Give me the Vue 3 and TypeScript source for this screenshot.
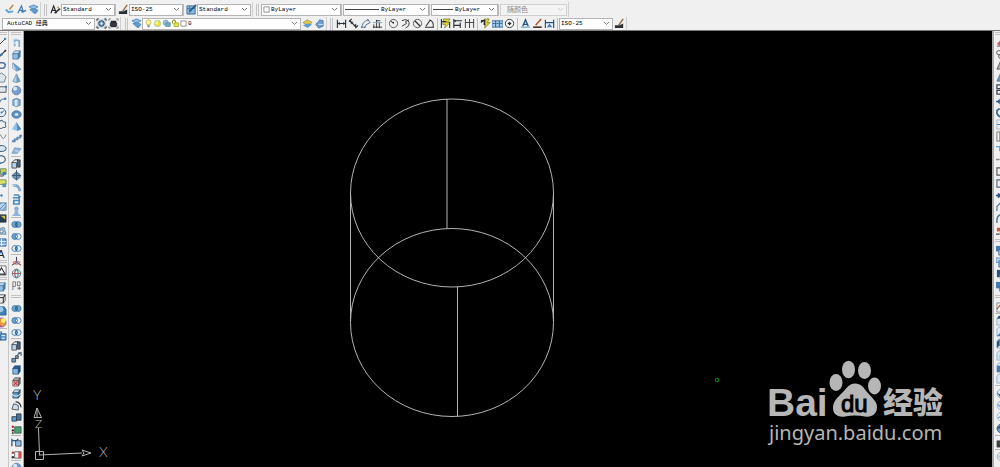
<script setup lang="ts">
import { h, type FunctionalComponent } from 'vue'

const K = '#2b3036'
const B = '#3f7cb8'
const D = '#255583'
const L = '#a9cbe8'

const line = (d: string, color = K, width = 1) =>
  `<path d="${d}" fill="none" stroke="${color}" stroke-width="${width}"/>`
const shape = (d: string, fill: string, stroke = 'none') =>
  `<path d="${d}" fill="${fill}" stroke="${stroke}" stroke-width=".8"/>`
const dot = (x: number, y: number, r: number, fill: string, stroke = 'none') =>
  `<circle cx="${x}" cy="${y}" r="${r}" fill="${fill}" stroke="${stroke}" stroke-width="1"/>`

const cube = (front: string, top: string, side: string, edge: string) =>
  shape('M2 5h6v6H2z', front, edge) + shape('M2 5l2-3h6L8 5z', top, edge) + shape('M8 5l2-3v6l-2 3z', side, edge)
const pair = (left: string, right: string, mid: string) =>
  dot(4.2, 6, 3.2, left, B) + dot(7.8, 6, 3.2, right, B) + shape('M6 3.4Q8.4 6 6 8.6Q3.6 6 6 3.4z', mid, D)
const tile = (fill: string, cut: string) =>
  shape('M1 4l2-3h8v10H1z', '#d9e9f6', '#7aa5cb') + shape(cut, fill)

const glyphs: Record<string, string> = {
  brush: line('M2 6l3 3 5-1', '#5da5d6', 2) + line('M6 6l4-5', '#b98541', 1.6),
  textPen: line('M2 10l4-8 2 7M3 7h4', '#3f78ad', 1.3) + line('M6 9l5-2', B, 1.6),
  layers: shape('M1 3l5-2 5 2-5 3z', '#91bfe4', B) + shape('M2 6l5-1 4 2-4 3z', '#659dce', B) + shape('M2 8l5 2 4-2-3 3z', B),
  styleA: line('M1 10l3-8 3 8M2 7h4', K, 1.3) + line('M5 10l6-5', K, 1.6) + line('M8 3l2 2', '#c28b35', 1.4),
  dimPen: shape('M1 11V8h5l4-2v5z', K) + line('M5 8l5-7', '#8b6b40', 1.5),
  tablePen: shape('M1 2h9v9H1z', '#8bb8df', D) + line('M1 5h9M4 2v9', B) + line('M4 8l7-7', D, 1.7),
  gear: shape('M1 1h10v10H1z', '#c9d9e5') + line('M1 3V1h2M9 1h2v2M11 9v2H9M3 11H1V9', K) + dot(6, 6, 3, '#7aa7ce', K) + dot(6, 6, 1, '#fff'),
  workspace: line('M1 3V1h2M9 1h2v2M11 9v2H9M3 11H1V9', '#777') + shape('M3 3h6v7H3z', '#25292d') + shape('M2 5h8v4H2z', '#353a40'),
  layerPrev: shape('M1 5l5-3 5 3-5 3z', '#e5c94d', '#9b8e45') + shape('M1 8l5-2 5 1-5 4z', '#5b9ace'),
  layerState: shape('M2 7l4-5 4 1v6l-5 2z', '#6b9eca', '#426f9a') + line('M1 6l4-3M5 7h5', '#d9ecfa', 1),
  dimLinear: line('M1.5 2v9M10.5 2v9M2 6h8', K, 1.2) + shape('M2 6l2-2v4zM10 6L8 4v4z', K),
  dimAligned: line('M2 3l7 7M1 4l3-3M8 11l3-3', K, 1.3) + shape('M3 4h3L3 7zM9 9V6L6 9z', K),
  dimArc: line('M2 11Q2 4 9 2M5 11Q5 7 11 5M1 10h5M8 1l3 4', '#486b89', 1),
  dimOrd: line('M1 10h10M2 7v4M5 2v9M8 5v6M5 3h4', K) + line('M1 5h10', '#82a4c0'),
  radius: dot(6, 6, 4.5, 'none', '#555') + line('M6 6L3 3M6 6V4', K, 1.1),
  jogged: line('M2 3Q8 0 10 5Q11 9 6 11M2 9l5-3-1-2 4-2', K),
  diameter: dot(6, 6, 4.5, 'none', '#555') + line('M3 3l6 6', K, 1.3),
  angular: line('M1 10h10M2 9l5-7M6 2Q11 4 10 10', K, 1.1),
  quick: shape('M4 1h7L8 5h3L5 11l1-4H3z', '#e2cf38', '#6f8428') + line('M1.5 1v10M10.5 4v7M2 4h5', K, 1.2),
  baseline: line('M2 1v10M2 3h9M2 8h7M9 5v6', K, 1.2) + shape('M2 3l2-1v3z', K),
  cont: line('M1.5 1v10M6 1v10M10.5 1v10M2 5h8', '#454b50', 1.1),
  dimEdit: shape('M5 1h5L8 5h3L5 11l1-4H4z', '#dfd239', '#82782c') + line('M1 3h5M5 2v6M1 5l4-3', K, 1.4),
  tol: shape('M0 3h12v7H0z', '#a5cbea', D) + line('M4 3v7M8 3v7M1 6h2M5 6h2M9 6h2', D),
  center: dot(6, 6, 4.5, '#fff', K) + line('M6 4v4M4 6h4', K, 1.4),
  dimA: line('M3 9l3-7 3 7M4 7h4', D, 1.5) + line('M1 10h10', '#63a8da', 1.3),
  dimText: line('M2 10h9M4 8l6-7', '#a35f34', 1.7) + line('M1 10h9', K, 1.3),
  dimUpdate: line('M1.5 2v9M10.5 2v9M2 5h8', D, 1.3) + shape('M3 10l3-4 3 4z', B),
  bulb: dot(6, 4.5, 3.4, '#fff79c', '#b5ad4a') + shape('M4.5 8h3v3h-3z', '#8b9199'),
  sun: dot(6, 6, 4.3, '#f4df34', '#80c6c9') + dot(5, 5, 2, '#fff489'),
  freeze: dot(5, 5, 3.6, '#9bc2dc', '#719ab5') + shape('M5 5h6v5H5z', '#6ab3b9', '#587c87'),
  unlock: line('M2 6V3q2-3 4 0v2', '#9c9c21', 1.5) + shape('M4 5h6v5H4z', '#e3e647', '#858c22'),
  swatch: shape('M1.5 1.5h9v9h-9z', '#fff', '#222'),
  line: line('M1 11L11 1', K) + dot(10, 2, 1.2, B),
  xline: line('M1 11L11 1', K, 1.2) + dot(6, 6, 1.4, B) + dot(10, 2, 1, K),
  pline: line('M1 9h6q3 0 3-3T7 3H3', '#54759a', 1.4) + dot(10, 5, 1, B),
  polygon: shape('M6 1l5 4-2 6H3L1 5z', '#dde6eb', '#4c6679'),
  rect: shape('M1 3h10v6H1z', '#dfe8ef', K) + dot(11, 3, 1.3, B),
  arc: line('M2 10Q3 3 11 3', '#49687f') + dot(10, 3, 1.3, B) + dot(4, 6, 1.2, B),
  circle: dot(6, 6, 4.6, '#e9f1f6', '#345e87') + line('M6 6l3-2', B) + dot(6, 6, 1.2, B),
  cloud: line('M2 8Q0 4 4 3Q6 0 8 3Q12 3 10 6Q12 10 8 9Q5 12 2 8', '#526e84', 1.1),
  spline: line('M1 7Q4 1 6 6T11 4', '#6f7980', 1),
  ellipse: `<ellipse cx="6" cy="6" rx="5" ry="3.3" fill="#d6e5ee" stroke="#426b8d" stroke-width="1.2"/>`,
  ellArc: line('M2 3Q8 0 10 5Q11 9 5 10', '#4d6c83', 1.3) + dot(5, 10, 1, B),
  block: shape('M1 6h7v5H1z', '#b8cfdd', K) + shape('M5 3h6v6H5z', '#cfd94e', '#51744a') + dot(9, 8, 2, B),
  makeBlock: shape('M3 2h8v5H3z', '#dce266', '#5c7540') + shape('M7 6h4v4H7z', '#5895bd'),
  point: dot(6, 6, 1.3, B),
  hatch: shape('M1 2h10v8H1z', '#bed7ea', '#436887') + line('M1 7l5-5M3 10l8-8M7 10l4-4', B),
  gradient: shape('M1 2h10v8H1z', '#26394d', K) + shape('M5 3h5v4z', '#cdbc52'),
  region: shape('M2 9Q3 2 9 3l2 7H1z', '#acc8db', '#577a94') + dot(6, 7, 1.8, '#eee', '#577a94'),
  table: shape('M1 2h10v8H1z', '#78a7dd', D) + line('M1 5h10M1 8h10M6 2v8', '#e8f2ff'),
  cubeBlue: cube('#93bddf', '#c8def0', '#4e83b4', '#47759c'),
  cubeWire: cube('none', 'none', 'none', K),
  polysolid: line('M4 10V7M4 6V3l5 1v7', '#82add4', 2) + line('M3 3l3-1', '#b9d4ea', 1.4),
  wedge: shape('M2 2l9 7-5 2-4-3z', '#6d9fc9', '#527fa5') + shape('M2 2v6l4 3z', '#c2d9eb'),
  cone: shape('M6 1l4 8q-4 3-8 0z', '#b3cfe4', '#6c8da8') + shape('M6 1v9q3 0 4-1z', '#7199ba'),
  sphere: dot(6, 6, 4.7, '#729fd0', '#6685a9') + dot(4.5, 4, 2.2, '#d6e7f5'),
  cylinder: shape('M2 3q4-3 8 0v6q-4 3-8 0z', '#82afd5', '#4c769b') + shape('M4 3h3v7H4z', '#d4e6f3'),
  torus: `<ellipse cx="6" cy="6" rx="5" ry="4" fill="#5e92bf" stroke="#44739e"/><ellipse cx="6" cy="6" rx="2" ry="1.3" fill="#e1edf6"/>`,
  pyramid: shape('M6 1l5 8-4 2-6-2z', '#91c3e8') + shape('M6 1l5 8-4 2z', '#4d8cc3'),
  helix: line('M1 9h3V7h3V5h3V3h2', '#5a8ab5', 2),
  surface: shape('M4 3l7 1-4 5-6 0z', '#8eb5d8', '#6e96b9') + line('M4 6l4 1', '#dceaf5'),
  extrude: shape('M1 5h5v6H1z', '#b9d2e5', K) + shape('M7 2h3v8H7z', '#416789', K) + line('M1 5l3-3h4', K),
  press: shape('M2 5l4-3 4 3v3l-4 3-4-3z', '#6d96ba', '#3c5a74') + line('M6 0v11M1 6h10', '#385873'),
  sweep: line('M2 4Q8 2 10 10', '#7aa8d0', 3) + line('M1 5l4-2', '#d4e8f7'),
  revolve: line('M2 4h7v7H3V7h7M3 1h6', '#4a8abc', 1.7) + shape('M8 1l3 2-3 2z', B),
  loft: dot(6, 3, 2, '#8db5d9', '#7ba4c8') + shape('M4 5h4v3l3 3H1l3-3z', '#8db5d9'),
  union: pair('#72a8ca', '#72a8ca', '#4c8191'),
  subtract: pair('#6aa6cb', '#f1f5f8', '#dce9f2'),
  intersect: pair('#e9f0f5', '#e9f0f5', '#5d99c2'),
  move3: line('M6 6V1M6 7L1 10M6 7l5 3', K) + line('M2 7q4-3 8 0q-4 4-8 0', '#cc5049') + dot(6, 7, 1, B),
  rotate3: dot(6, 6, 4.6, '#e4eff2', '#4c80a4') + line('M6 1q-4 5 0 10M1 6h10', '#bf5759', 1.3) + line('M6 1q4 5 0 10', '#4a947b', 1.3),
  align3: line('M2 11V2h3v5H2M7 2v4h3V2z', '#787878', 1) + line('M7 9h4M9 7v4', '#596c7b'),
  visual: shape('M1 1h10v10H1z', '#fff', '#444') + line('M2 10l4-7 4 7z', K, 1.2),
  shaded: shape('M2 2h7l2 3v6H2z', '#3f80b6', D) + dot(5, 5, 3, '#9bcae9'),
  ball: dot(6, 6, 5, '#e4983f', '#9961a9') + dot(8, 4, 2.6, '#fff16d') + shape('M2 7l5 4-4-1z', '#693a9d'),
  sheets: shape('M1 2h5v9H1z', '#b3d2ea', D) + shape('M5 4h6v7H5z', '#5e9bd0', D) + line('M6 6h4M6 9h4', '#dcebf7'),
  faceCopy: shape('M1 7h4v4H1z', '#6d9ec5', K) + shape('M5 4h3v3H5z', '#8a9aa7', K) + line('M7 3l3-2M8 1h3v3', '#36536b', 1.2),
  faceBlue: cube('#87b8e4', '#2b5c8b', '#1e4165', D),
  faceRed: cube('#f2c3c6', '#aaa', '#777', '#4b4b4b') + line('M3 6l4 4M7 6l-4 4', '#d03c45', 1.3),
  faceTurn: cube('#6198c5', '#c4dbed', '#406784', '#356') + line('M1 7q5 4 10-1', '#fff'),
  taper: shape('M1 10l2-6 5 2v5z', '#d0e0ec', K) + line('M5 2q5 0 6 6', K, 1.2),
  faces: shape('M1 5h5v5H1z', '#579ad0', K) + shape('M6 2h5v7H6z', '#41749f', K),
  faceGreen: shape('M4 3h7v7H4z', '#4ea071', '#324f40') + dot(2, 3, 1.3, '#b53434') + dot(2, 7, 1.3, '#333') + dot(2, 10, 1.2, '#555'),
  edgeCopy: shape('M5 4h6v6H5z', '#8eb8dc', K) + line('M1 2v8M1 4h5l2-2', D, 1.4),
  edgeColor: shape('M4 3h7v7H4z', '#eee', '#444') + shape('M8 3h3v7H8z', '#d54e50') + dot(2, 4, 1.3, '#a33') + dot(2, 9, 1.3, '#333'),
  erase: line('M1 10h10', '#567') + shape('M1 8l4-5 3 2-3 5z', '#c65d62'),
  copy: dot(3, 4, 2.3, '#eee', '#555') + dot(5, 8, 2.2, '#ddd', '#555'),
  mirror: shape('M1 10L5 1v9z', '#aaa', '#444'),
  mirrorBlue: shape('M1 10L5 1v9z', '#559bd5', '#666'),
  array: line('M1 1h4v4H1zM1 7h4v4H1zM7 1h4v4H7z', '#3c4650', 1.4),
  move: line('M0 6h11M5 2v8', B, 1.5) + shape('M1 6l3-3v6z', D),
  rotate: line('M6 2Q0 2 1 7q2 5 7 3', '#3671a7', 2),
  scale: shape('M1 1h10v10H1z', '#e7f0f7', '#8fafca') + line('M1 6h10', B),
  stretch: shape('M1 1h7v10H1z', '#f5f5f5', '#555') + line('M4 1v10', '#888'),
  trim: line('M0 4h6M4 4v5', '#69a6d8', 1.4),
  extend: line('M0 6h4M6 6h3', '#8b8b8b', 1.4),
  breakAt: line('M7 2H1v8h7', '#555', 1.2),
  breaks: line('M6 2H1v8h8', '#526880', 1.2) + dot(5, 2, 1, B),
  join: line('M0 6h8', D, 1.8) + shape('M2 3l5 3-5 3z', D),
  chamfer: line('M1 11V6l4-4h6', '#4a7899', 1.3),
  fillet: line('M1 11V8q0-7 8-7', '#3877ae', 1.5),
  explode: shape('M1 3h4v4H1z', '#d45144') + shape('M4 6h5v4H4z', '#d8ae3b') + line('M0 10h4', '#456', 1.4),
  front: shape('M0 1h7v6H0z', B) + shape('M3 5h8v6H3z', '#a5c9e5', D),
  back: shape('M0 1h6v5H0z', '#b9d7ee', B) + shape('M3 4h7v7H3z', '#72a8d4', B),
  above: shape('M1 1h8v8H1z', D) + shape('M4 6h6v5H4z', '#82add2'),
  under: shape('M0 1h8v7H0z', B) + shape('M4 5h7v6H4z', '#e4eff8', D),
  named: shape('M1 1h10v10H1z', '#eef3f6', '#66757f') + line('M1 8l3-4 4 5', '#ae6c42', 1.4),
  viewTop: tile(D, 'M1 4l2-3h8v3z'),
  viewBottom: tile(B, 'M1 11l4-4h6v4z'),
  viewLeft: tile(D, 'M1 4l3-3v7l-3 3z'),
  viewRight: tile('#b5d3ec', 'M3 5h7v5H3z'),
  viewFront: tile(B, 'M1 4h9v7H1z'),
  viewBack: tile(D, 'M5 1h6v5H5z'),
  isoA: dot(6, 6, 4.8, '#d7e7f4', '#7ba5c8') + shape('M1 5l5 3v4z', D),
  isoB: dot(6, 6, 4.8, '#cfe2f2', '#94b7d2') + line('M2 5l4 3', B),
  isoC: dot(6, 6, 4.8, '#e6f0f7', '#9abbd4') + line('M2 8l4-3', B),
  isoD: dot(6, 6, 4.8, '#6da4d0', D) + shape('M1 6l4-4 2 4z', D),
  camera: shape('M1 3h10v7H1z', '#31363c', '#666') + dot(6, 6, 2, '#a8bccb'),
  orbit: dot(6, 6, 4.6, '#edf1f4', '#9aa8b4') + dot(4, 6, 1.5, L),
}

const Glyph: FunctionalComponent<{ name: string }> = (props) =>
  h('svg', { viewBox: '0 0 12 12', width: 11, height: 11, 'aria-hidden': 'true', innerHTML: glyphs[props.name] })

interface Item {
  kind: 'icon' | 'sep' | 'select' | 'grip'
  name?: string
  label?: string
  value?: string
  size?: string
  line?: string
  icons?: string[]
  disabled?: boolean
}
const icons = (names: string): Item[] => names.split(' ').map((name) => ({ kind: 'icon', name }))
const grip: Item = { kind: 'grip' }
const sep: Item = { kind: 'sep' }
const select = (label: string, value: string, size: string, extra: Partial<Item> = {}): Item =>
  ({ kind: 'select', label, value, size, ...extra })

const rows: Item[][][] = [
  [
    icons('brush textPen layers'),
    [
      grip, ...icons('styleA'), select('Text style', 'Standard', 'small'), sep,
      ...icons('dimPen'), select('Dimension style', 'ISO-25', 'small'), sep,
      ...icons('tablePen'), select('Table style', 'Standard', 'small'),
    ],
    [
      grip, select('Colour', 'ByLayer', 'medium', { icons: ['swatch'] }), sep,
      select('Linetype', 'ByLayer', 'wide', { line: 'long' }), sep,
      select('Lineweight', 'ByLayer', 'plain', { line: 'short' }), sep,
      select('Plot style', '随颜色', 'plain', { disabled: true }),
    ],
  ],
  [
    [select('Workspace', 'AutoCAD 经典', 'space'), ...icons('gear workspace')],
    [
      grip, ...icons('layers'),
      select('Layer', '0', 'layer', { icons: ['bulb', 'sun', 'freeze', 'unlock', 'swatch'] }),
      ...icons('layerPrev layerState'),
    ],
    [
      grip, ...icons('dimLinear dimAligned dimArc dimOrd'), sep,
      ...icons('radius jogged diameter angular'), sep, ...icons('quick baseline cont'), sep,
      ...icons('dimEdit tol center'), sep, ...icons('dimA dimText dimUpdate'), sep,
      select('Current dimension style', 'ISO-25', 'small'), ...icons('dimPen'),
    ],
  ],
]

const drawTools: Item[] = [
  grip,
  ...icons('line xline pline polygon rect arc circle cloud spline ellipse ellArc block makeBlock point hatch gradient region table'),
  { kind: 'icon', name: 'letter' },
  grip, ...icons('visual'), grip, ...icons('cubeBlue cubeWire shaded ball'), sep, ...icons('sheets'),
]
const modelTools: Item[] = [
  grip, ...icons('polysolid cubeBlue wedge cone sphere cylinder torus pyramid helix surface'), sep,
  ...icons('extrude press sweep revolve loft'), sep, ...icons('union subtract intersect'), sep,
  ...icons('move3 rotate3 align3'), { kind: 'grip', size: 'tall' }, ...icons('union subtract intersect'), sep,
  ...icons('extrude faceCopy faceBlue faceRed faceTurn taper faces faceGreen'), sep,
  ...icons('edgeCopy edgeColor'), sep, ...icons('sphere'),
]
const modifyTools: Item[] = [
  grip,
  ...icons('erase copy mirror mirrorBlue array move rotate scale stretch trim extend breakAt breaks join chamfer fillet explode'),
  { kind: 'grip', size: 'tall' }, ...icons('front back above under'), { kind: 'grip', size: 'tall' }, ...icons('named'), sep,
  ...icons('viewTop viewBottom viewLeft viewRight viewFront viewBack'), { kind: 'sep', size: 'loose' },
  ...icons('isoA isoB isoC isoD'), { kind: 'sep', size: 'loose' }, ...icons('camera'), sep, ...icons('orbit'),
]
const sides = { draw: drawTools, model: modelTools }
</script>

<template>
  <div class="app">
    <header class="bars">
      <div v-for="(row, r) in rows" :key="r" class="row">
        <div v-for="(bar, b) in row" :key="b" class="bar" role="toolbar">
          <template v-for="(item, i) in bar" :key="i">
            <span v-if="item.kind === 'grip'" class="grip"></span>
            <span v-else-if="item.kind === 'sep'" class="sep" :class="{ spaced: r === 1 }"></span>
            <button v-else-if="item.kind === 'icon'" class="tool" type="button" :aria-label="item.name">
              <Glyph :name="item.name!" />
            </button>
            <label v-else class="field" :class="[item.size, { off: item.disabled }]">
              <span v-if="item.icons" class="badges"><Glyph v-for="n in item.icons" :key="n" :name="n" /></span>
              <span v-if="item.line" class="stroke" :class="item.line"></span>
              <select :aria-label="item.label" :disabled="item.disabled"><option>{{ item.value }}</option></select>
              <svg class="arrow" viewBox="0 0 7 5"><path d="M1 1l2.5 2.5L6 1" /></svg>
            </label>
          </template>
        </div>
      </div>
    </header>

    <div class="work">
      <nav v-for="(items, side) in sides" :key="side" class="side" :class="side">
        <template v-for="(item, i) in items" :key="i">
          <span v-if="item.kind === 'grip'" class="grip" :class="item.size"></span>
          <span v-else-if="item.kind === 'sep'" class="sep"></span>
          <button v-else class="tool" type="button" :aria-label="item.name">
            <span v-if="item.name === 'letter'" class="letter">A</span>
            <Glyph v-else :name="item.name!" />
          </button>
        </template>
      </nav>

      <main class="canvas">
        <svg class="drawing" viewBox="24 31 968 436">
          <g class="wire">
            <ellipse cx="452" cy="193" rx="101.5" ry="94" />
            <ellipse cx="452" cy="322.5" rx="101.5" ry="94" />
            <path d="M350.5 193V322M553.5 193V322M447 99V228.5M457.5 287V416.5" />
          </g>
          <path class="pick" d="M715.5 378.5h3v3h-3z" />
          <g class="ucs">
            <path d="M35.5 451.5h8v8h-8zM39.5 455.5L38.5 428M39.5 455L82 453M82 450l9 3-9 3 2-3zM37 408l-3 9.5h7.5zM37 408v9.5" />
            <text x="33" y="400">Y</text>
            <text x="99" y="457">X</text>
            <text x="35" y="428" class="z">Z</text>
          </g>
          <g class="mark">
            <text x="767" y="416" class="latin">Bai</text>
            <ellipse cx="836" cy="382.5" rx="6.5" ry="8.5" />
            <ellipse cx="848.5" cy="369.5" rx="6.5" ry="8.7" />
            <ellipse cx="864.5" cy="370.5" rx="6.5" ry="8.5" />
            <ellipse cx="874.5" cy="386" rx="6.5" ry="8.5" />
            <path d="M855 383.500C849 383.500 847 388 843 392C838 397 833 401 833 408C833 415 839 417.500 845 416.500Q855 414.500 865 416.500C872 417.500 877 414 877 407C877 401 871 397 867 392C863 387 861 383.500 855 383.500z" />
            <text x="841" y="412" class="du">du</text>
            <text x="883" y="413" class="han">经验</text>
            <text x="769" y="440" class="url">jingyan.baidu.com</text>
          </g>
        </svg>
      </main>

      <nav class="side modify">
        <template v-for="(item, i) in modifyTools" :key="i">
          <span v-if="item.kind === 'grip'" class="grip" :class="item.size"></span>
          <span v-else-if="item.kind === 'sep'" class="sep" :class="item.size"></span>
          <button v-else class="tool" type="button" :aria-label="item.name"><Glyph :name="item.name!" /></button>
        </template>
      </nav>
    </div>
  </div>
</template>

<style>
body { margin: 0; overflow: hidden; }
</style>

<style scoped>
.app {
  height: 100vh;
  display: flex;
  flex-direction: column;
  background: #f0f0f0;
  font-family: "Liberation Mono", "Noto Sans CJK SC", monospace;
  font-size: 6px;
  color: #333;
}
.bars { flex: none; padding-top: 2px; border-bottom: 1px solid #777; }
.row { display: flex; height: 15px; }
.row + .row { height: 13px; }
.bar {
  display: flex;
  align-items: center;
  box-sizing: border-box;
  padding-right: 1px;
  margin-right: 1px;
  border-right: 1px solid #cfcfcf;
}
.row .bar:first-child { padding-left: 3px; }
.row + .row .bar:first-child { padding-left: 2px; margin-right: 2px; }
.tool {
  display: flex;
  align-items: center;
  justify-content: center;
  flex: none;
  width: 12px;
  height: 12px;
  padding: 0;
  border: 0;
  background: none;
}
.tool svg, .badges svg { display: block; flex: none; }
.bar .grip {
  box-sizing: border-box;
  width: 3px;
  height: 12px;
  margin: 0 2px;
  border-left: 1px solid #c4c4c4;
  border-right: 1px solid #c4c4c4;
}
.bar .sep { width: 1px; height: 12px; margin-right: 1px; background: #bdbdbd; }
.bar .sep.spaced { margin: 0 1px 0 2px; }
.field {
  position: relative;
  display: flex;
  align-items: center;
  box-sizing: border-box;
  height: 12px;
  border: 1px solid #b4b4b4;
  background: #fff;
}
.small { width: 54px; }
.medium { width: 80px; }
.wide { width: 86px; }
.plain { width: 67px; }
.space { width: 93px; }
.layer { width: 159px; }
.field select {
  appearance: none;
  flex: 1;
  min-width: 0;
  height: 10px;
  padding: 0 0 0 1px;
  border: 0;
  background: none;
  color: #000;
  font: inherit;
  line-height: 10px;
}
.space select { padding-left: 4px; }
.off { border-color: #d0d0d0; background: #f4f4f4; }
.off select { padding-left: 6px; color: #888; opacity: 1; font-size: 7px; }
.arrow { position: absolute; right: 2px; width: 7px; height: 5px; fill: none; stroke: #777; }
.off .arrow { stroke: #ccc; }
.badges { display: flex; padding-left: 1px; }
.badges svg { width: 9px; height: 9px; }
.medium .badges svg { width: 7px; height: 9px; }
.layer .badges svg:last-child { width: 7px; height: 9px; }
.stroke { height: 1px; margin: 0 1px; background: #444; }
.long { width: 34px; }
.short { width: 20px; }

.work { display: flex; flex: 1; min-height: 0; overflow: hidden; }
.side {
  display: flex;
  flex-direction: column;
  align-items: center;
  flex: none;
  box-sizing: border-box;
  overflow: hidden;
  border-right: 1px solid #c6c6c6;
}
.draw { width: 9px; align-items: flex-end; padding-right: 1px; }
.model { width: 15px; border-right: 1px solid #a5a5a5; }
.modify { width: 8px; align-items: flex-start; padding-left: 1px; border-right: 0; border-left: 2px solid #aaa; }
.draw .tool:nth-child(4n), .modify .tool:nth-child(4n) { height: 11px; }
.side .grip {
  box-sizing: border-box;
  flex: none;
  width: 10px;
  height: 3px;
  margin: 1px 0;
  border-top: 1px solid #c2c2c2;
  border-bottom: 1px solid #c2c2c2;
}
.side .grip.tall { margin: 4px 0; }
.modify .grip.tall { margin: 3px 0; }
.side .sep { flex: none; width: 10px; height: 1px; background: #b9b9b9; }
.side .sep.loose { margin: 1px 0; }
.letter { font: 11px "Liberation Sans", sans-serif; color: #222; }

.canvas { flex: 1; min-width: 0; background: #000; }
.drawing { display: block; width: 100%; height: 100%; }
.wire, .ucs path { fill: none; stroke: #b4b4b4; stroke-width: 1; }
.pick { fill: none; stroke: #087c16; }
.ucs text { fill: #b4b4b4; font: 300 14px Lato, "Open Sans", sans-serif; }
.ucs .z { font-size: 12px; }
.mark { fill: #b6b6b6; }
.latin { font: 700 39px "Liberation Sans", sans-serif; }
.du { fill: #000; font: 24px "Liberation Sans", sans-serif; stroke: #000; stroke-width: 1; }
.han { font: 900 30px "Noto Sans CJK SC", sans-serif; }
.url { font: 20px "Noto Sans", sans-serif; }
</style>
